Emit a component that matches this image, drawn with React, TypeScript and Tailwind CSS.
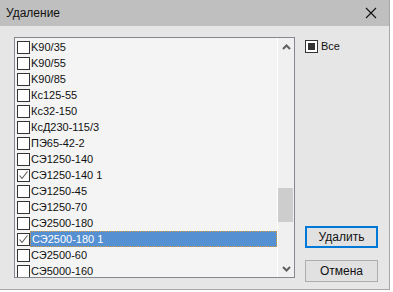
import React from 'react';

const ITEMS: { label: string; checked?: boolean; selected?: boolean }[] = [
  { label: 'K90/35' },
  { label: 'K90/55' },
  { label: 'K90/85' },
  { label: 'Кс125-55' },
  { label: 'Кс32-150' },
  { label: 'КсД230-115/3' },
  { label: 'ПЭ65-42-2' },
  { label: 'СЭ1250-140' },
  { label: 'СЭ1250-140 1', checked: true },
  { label: 'СЭ1250-45' },
  { label: 'СЭ1250-70' },
  { label: 'СЭ2500-180' },
  { label: 'СЭ2500-180 1', checked: true, selected: true },
  { label: 'СЭ2500-60' },
  { label: 'СЭ5000-160' },
];

function Check({ checked }: { checked?: boolean }) {
  return (
    <div className="w-[13px] h-[13px] shrink-0 border border-[#333] bg-white flex items-center justify-center">
      {checked && (
        <svg width="11" height="11" viewBox="0 0 11 11">
          <polyline points="1.5,5.5 4,8.5 9.5,1.5" fill="none" stroke="#5a5a5a" strokeWidth="1.1" />
        </svg>
      )}
    </div>
  );
}

function Row({ label, checked, selected }: { label: string; checked?: boolean; selected?: boolean }) {
  return (
    <div className="h-[16px] flex items-center pl-[2px]">
      <Check checked={checked} />
      <div
        className={
          selected
            ? 'flex-1 h-[16px] flex items-center pl-[1px] bg-[#5590d2] text-white border border-dotted border-[#d99a3a]'
            : 'flex-1 h-[16px] flex items-center pl-[1px] text-[#111]'
        }
      >
        {label}
      </div>
    </div>
  );
}

function Chevron({ up }: { up?: boolean }) {
  return (
    <svg width="9" height="6" viewBox="0 0 9 6">
      <polyline
        points={up ? '1,5 4.5,1.5 8,5' : '1,1 4.5,4.5 8,1'}
        fill="none"
        stroke="#606060"
        strokeWidth="2"
      />
    </svg>
  );
}

export default function App() {
  return (
    <div
      className="w-[390px] h-[290px] bg-[#e6e6e6] border-r border-b border-[#a8a8a8] flex flex-col"
      style={{ fontFamily: '"Liberation Sans", Arial, sans-serif' }}
    >
      <div className="h-[26px] shrink-0 bg-[#bfbfbf] flex items-center justify-between pl-[6px] pr-[12px]">
        <span className="text-[12px] text-[#111]">Удаление</span>
        <svg width="12" height="12" viewBox="0 0 12 12">
          <path d="M1 1L11 11M11 1L1 11" stroke="#111" strokeWidth="1.1" />
        </svg>
      </div>
      <div className="flex-1 flex pl-[14px] pt-[11px]">
        <div className="w-[281px] h-[241px] border border-[#85888f] bg-[#f4f4f4] flex">
          <div className="flex-1 pt-[1px] text-[11px] overflow-hidden">
            {ITEMS.map((it) => (
              <Row key={it.label} {...it} />
            ))}
          </div>
          <div className="w-[17px] h-full bg-[#f0f0f0] border-l border-white flex flex-col items-center">
            <div className="h-[17px] flex items-center justify-center">
              <Chevron up />
            </div>
            <div className="flex-1 w-full">
              <div className="mt-[133px] w-[15px] h-[34px] bg-[#cdcdcd]" />
            </div>
            <div className="h-[17px] flex items-center justify-center">
              <Chevron />
            </div>
          </div>
        </div>
        <div className="ml-[10px] flex flex-col">
          <div className="flex items-center gap-[3px] mt-[1px] text-[11px] text-[#111]">
            <div className="w-[13px] h-[13px] border border-[#333] bg-white flex items-center justify-center">
              <div className="w-[7px] h-[7px] bg-[#333]" />
            </div>
            <span>Все</span>
          </div>
          <button className="mt-[171px] w-[73px] h-[22px] bg-[#e1e1e1] border-2 border-[#0078d7] text-[12px] text-[#111]">
            Удалить
          </button>
          <button className="mt-[12px] w-[73px] h-[22px] bg-[#e1e1e1] border border-[#adadad] text-[12px] text-[#111]">
            Отмена
          </button>
        </div>
      </div>
    </div>
  );
}
